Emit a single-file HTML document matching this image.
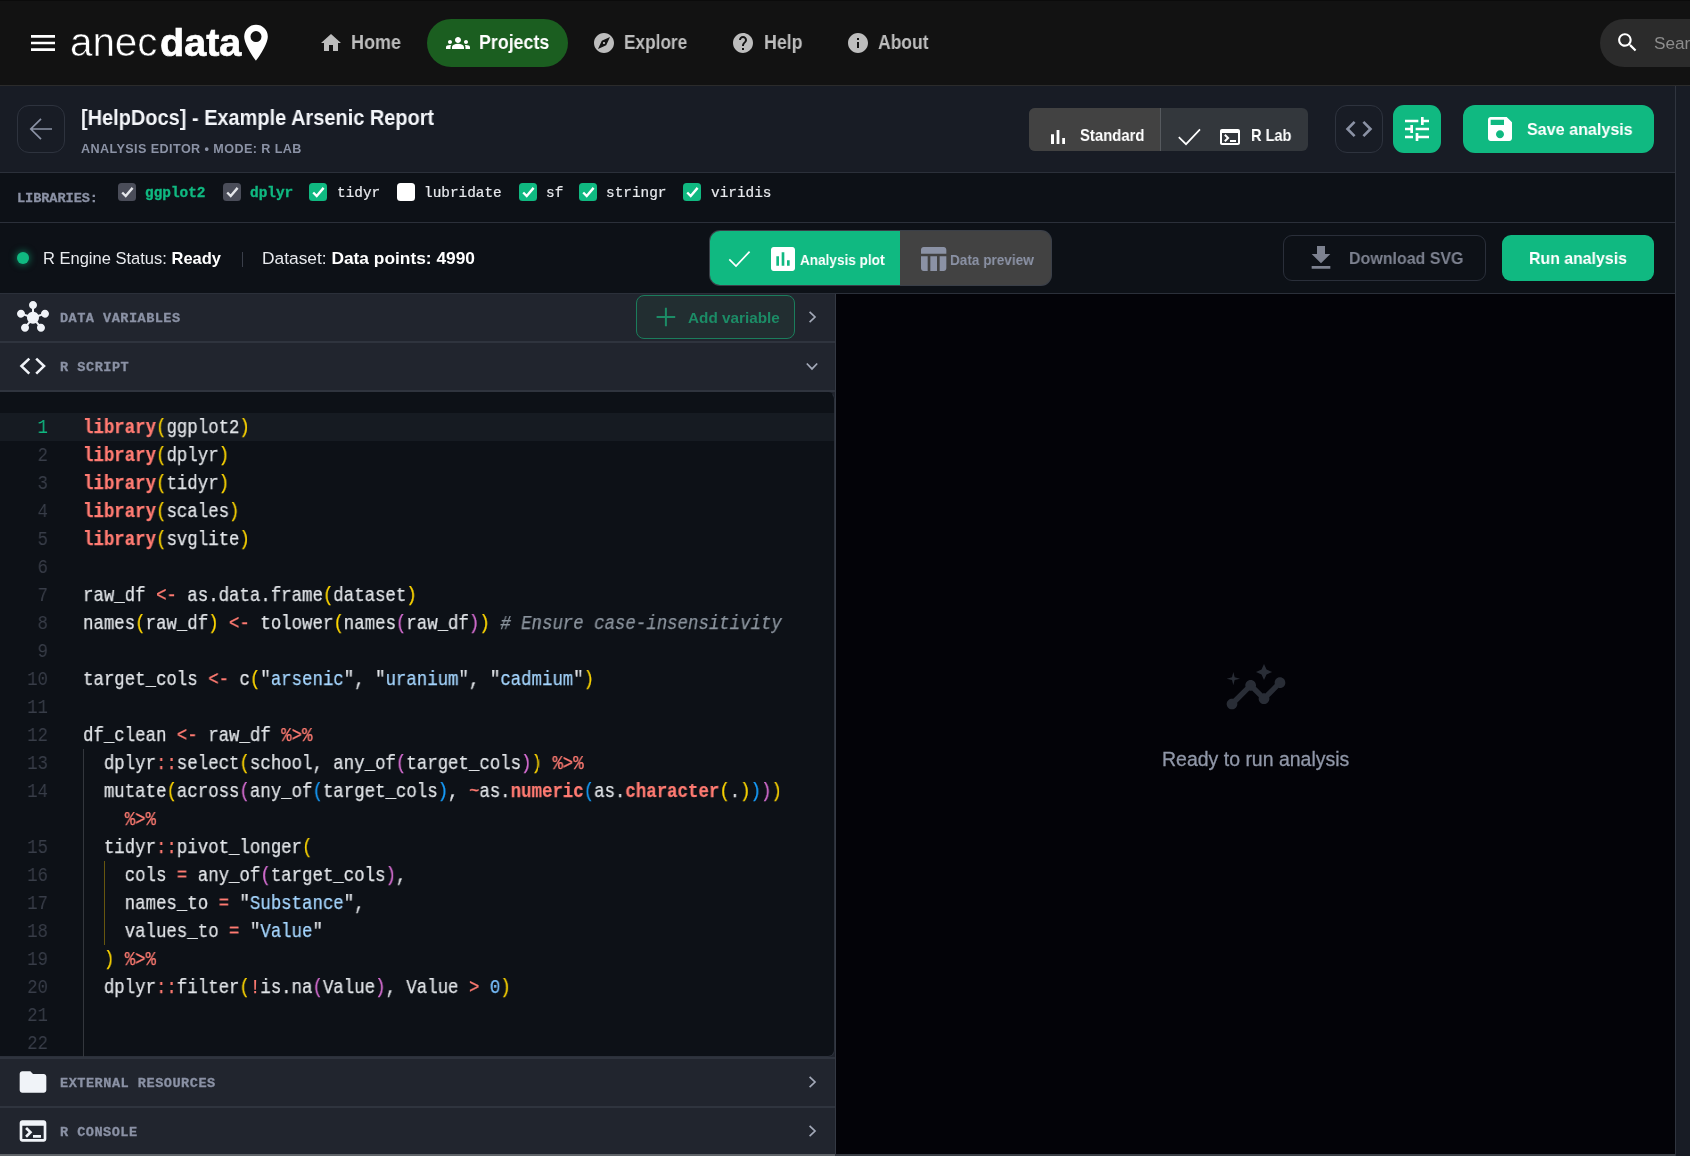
<!DOCTYPE html>
<html lang="en"><head><meta charset="utf-8"><title>Anecdata - Analysis Editor</title>
<style>
html,body{margin:0;padding:0;background:#0d1117;}
body{width:1690px;height:1156px;position:relative;overflow:hidden;font-family:"Liberation Sans",sans-serif;}
.t{position:absolute;white-space:pre;margin:0;will-change:transform;}
.i,.b,.a{position:absolute;display:block;}
.b{box-sizing:border-box;}

.ln{position:absolute;left:0;width:47.9px;text-align:right;color:#383d48;font:400 20px/28px "Liberation Mono",monospace;height:28px;transform:scaleX(.869);transform-origin:100% 0;will-change:transform;}
.cl{position:absolute;left:82.5px;white-space:pre;color:#e1e4e8;font:400 19.5px/28px "Liberation Mono",monospace;height:28px;transform:scaleX(.8913);transform-origin:0 0;-webkit-text-stroke:.25px currentColor;will-change:transform;}
.k{color:#ff7b72;font-weight:700}.o{color:#ff7b72}.p1{color:#ffd700}.p2{color:#da70d6}.p3{color:#179fff}
.s{color:#a5d6ff}.n{color:#79c0ff}.c{color:#8b949e;font-style:italic}

</style></head><body>
<div class="b" style="left:0px;top:0px;width:1690px;height:85px;background:#121212;"></div>
<div class="b" style="left:0px;top:0px;width:1690px;height:1px;background:#0b0b0b;"></div>
<div class="b" style="left:0px;top:85px;width:1690px;height:1px;background:#2b2b2b;"></div>
<svg class="i" style="left:27.00px;top:27.00px" width="32.00" height="32.00" viewBox="0 0 24 24" fill="#ffffff" ><path d="M3 18h18v-2H3v2zm0-5h18v-2H3v2zm0-7v2h18V6H3z"/></svg>
<div class="t" style="left:70.20px;top:16.00px;font:400 40.00px/52px 'Liberation Sans',sans-serif;color:#fff;transform:scaleX(1.0078);transform-origin:0 0;-webkit-text-stroke:0.55px #121212;">anec</div>
<div class="t" style="left:159.60px;top:17.00px;font:700 39.20px/51px 'Liberation Sans',sans-serif;color:#fff;transform:scaleX(1.0090);transform-origin:0 0;-webkit-text-stroke:0.7px #fff;">data</div>
<svg class="i" style="left:240px;top:20px" width="32" height="44" viewBox="240 20 32 44"><path fill="#fff" fill-rule="evenodd" d="M256 60.8C256 60.8 244.2 45.5 244.2 36.6A11.8 11.8 0 1 1 267.8 36.6C267.8 45.5 256 60.8 256 60.8ZM256 31.1a5.5 5.5 0 1 0 0 11a5.5 5.5 0 1 0 0-11Z"/></svg>
<svg class="i" style="left:318.50px;top:31.00px" width="24.00" height="24.00" viewBox="0 0 24 24" fill="#bdbdbd" ><path d="M10 20v-6h4v6h5v-8h3L12 3 2 12h3v8z"/></svg>
<div class="t" style="left:351.40px;top:29.90px;font:700 19.60px/25px 'Liberation Sans',sans-serif;color:#bdbdbd;transform:scaleX(0.9183);transform-origin:0 0;">Home</div>
<div class="b" style="left:427px;top:19px;width:141px;height:48px;background:#1b5e20;border-radius:24px"></div>
<svg class="i" style="left:445.80px;top:31.00px" width="24.00" height="24.00" viewBox="0 0 24 24" fill="#fff" ><path d="M12 12.75c1.63 0 3.07.39 4.24.9 1.08.48 1.76 1.56 1.76 2.73V18H6v-1.61c0-1.18.68-2.26 1.76-2.73 1.17-.52 2.61-.91 4.24-.91zM4 13c1.1 0 2-.9 2-2s-.9-2-2-2-2 .9-2 2 .9 2 2 2zm1.13 1.1c-.37-.06-.74-.1-1.13-.1-.99 0-1.93.21-2.78.58C.48 14.9 0 15.62 0 16.43V18h4.5v-1.61c0-.83.23-1.61.63-2.29zM20 13c1.1 0 2-.9 2-2s-.9-2-2-2-2 .9-2 2 .9 2 2 2zm4 3.43c0-.81-.48-1.53-1.22-1.85-.85-.37-1.79-.58-2.78-.58-.39 0-.76.04-1.13.1.4.68.63 1.46.63 2.29V18H24v-1.57zM12 6c1.66 0 3 1.34 3 3s-1.34 3-3 3-3-1.34-3-3 1.34-3 3-3z"/></svg>
<div class="t" style="left:478.60px;top:29.90px;font:700 19.60px/25px 'Liberation Sans',sans-serif;color:#fff;transform:scaleX(0.9077);transform-origin:0 0;">Projects</div>
<svg class="i" style="left:592.00px;top:31.00px" width="24.00" height="24.00" viewBox="0 0 24 24" fill="#bdbdbd" ><path d="M12 10.9c-.61 0-1.1.49-1.1 1.1s.49 1.1 1.1 1.1c.61 0 1.1-.49 1.1-1.1s-.49-1.1-1.1-1.1zM12 2C6.48 2 2 6.48 2 12s4.48 10 10 10 10-4.48 10-10S17.52 2 12 2zm2.19 12.19L6 18l3.81-8.19L18 6l-3.81 8.19z"/></svg>
<div class="t" style="left:624.30px;top:29.90px;font:700 19.60px/25px 'Liberation Sans',sans-serif;color:#bdbdbd;transform:scaleX(0.8791);transform-origin:0 0;">Explore</div>
<svg class="i" style="left:731.00px;top:31.00px" width="24.00" height="24.00" viewBox="0 0 24 24" fill="#bdbdbd" ><path d="M12 2C6.48 2 2 6.48 2 12s4.48 10 10 10 10-4.48 10-10S17.52 2 12 2zm1 17h-2v-2h2v2zm2.07-7.75l-.9.92C13.45 12.9 13 13.5 13 15h-2v-.5c0-1.1.45-2.1 1.17-2.83l1.24-1.26c.37-.36.59-.86.59-1.41 0-1.1-.9-2-2-2s-2 .9-2 2H8c0-2.21 1.79-4 4-4s4 1.79 4 4c0 .88-.36 1.68-.93 2.25z"/></svg>
<div class="t" style="left:763.70px;top:29.90px;font:700 19.60px/25px 'Liberation Sans',sans-serif;color:#bdbdbd;transform:scaleX(0.9065);transform-origin:0 0;">Help</div>
<svg class="i" style="left:845.50px;top:31.00px" width="24.00" height="24.00" viewBox="0 0 24 24" fill="#bdbdbd" ><path d="M12 2C6.48 2 2 6.48 2 12s4.48 10 10 10 10-4.48 10-10S17.52 2 12 2zm1 15h-2v-6h2v6zm0-8h-2V7h2v2z"/></svg>
<div class="t" style="left:878.40px;top:29.90px;font:700 19.60px/25px 'Liberation Sans',sans-serif;color:#bdbdbd;transform:scaleX(0.8939);transform-origin:0 0;">About</div>
<div class="b" style="left:1600px;top:19px;width:140px;height:48px;background:#2b2b2b;border-radius:24px"></div>
<svg class="i" style="left:1614.50px;top:30.00px" width="25.00" height="25.00" viewBox="0 0 24 24" fill="#fff" ><path d="M15.5 14h-.79l-.28-.27C15.41 12.59 16 11.11 16 9.5 16 5.91 13.09 3 9.5 3S3 5.91 3 9.5 5.91 16 9.5 16c1.61 0 3.09-.59 4.23-1.57l.27.28v.79l5 4.99L20.49 19l-4.99-5zm-6 0C7.01 14 5 11.99 5 9.5S7.01 5 9.5 5 14 7.01 14 9.5 11.99 14 9.5 14z"/></svg>
<div class="t" style="left:1653.60px;top:32.00px;font:400 17.20px/22px 'Liberation Sans',sans-serif;color:#8c8c8c;">Search</div>
<div class="b" style="left:0px;top:86px;width:1690px;height:86px;background:#181c25;"></div>
<div class="b" style="left:0px;top:172px;width:1690px;height:1px;background:#2b303a;"></div>
<div class="b" style="left:17px;top:105px;width:48px;height:48px;background:transparent;border:1px solid #2e333e;border-radius:12px"></div>
<svg class="i" style="left:17px;top:105px" width="48" height="48" viewBox="17 105 48 48" fill="none" stroke="#8b92a5" stroke-width="1.7"><path d="M52 129H31.2M41 118.8L30.8 129L41 139.2"/></svg>
<div class="t" style="left:80.60px;top:104.20px;font:700 21.60px/28px 'Liberation Sans',sans-serif;color:#f3f5f9;transform:scaleX(0.9244);transform-origin:0 0;">[HelpDocs] - Example Arsenic Report</div>
<div class="t" style="left:81.30px;top:140.70px;font:700 12.60px/16px 'Liberation Sans',sans-serif;color:#8b92a5;letter-spacing:0.417px;">ANALYSIS EDITOR • MODE: R LAB</div>
<div class="b" style="left:1029px;top:108px;width:279px;height:43px;background:#33373c;border-radius:6px"></div>
<div class="b" style="left:1029px;top:108px;width:132px;height:43px;background:#424242;border-radius:6px 0 0 6px"></div>
<div class="b" style="left:1160px;top:108px;width:1px;height:43px;background:#565a5f;"></div>
<svg class="i" style="left:1046.00px;top:124.60px" width="24.00" height="24.00" viewBox="0 0 24 24" fill="#fff" ><path d="M5 9.2h3V19H5zM10.6 5h2.8v14h-2.8zm5.6 8H19v6h-2.8z"/></svg>
<div class="t" style="left:1079.80px;top:125.20px;font:700 16.20px/21px 'Liberation Sans',sans-serif;color:#fff;transform:scaleX(0.9187);transform-origin:0 0;">Standard</div>
<svg class="i" style="left:1174px;top:124px" width="32" height="26" viewBox="1174 124 32 26" fill="none" stroke="#fff" stroke-width="1.7"><path d="M1178.8 137.2L1186 144.2L1200 129.4"/></svg>
<svg class="i" style="left:1217.50px;top:124.80px" width="24.00" height="24.00" viewBox="0 0 24 24" fill="#fff" ><path d="M20 4H4c-1.11 0-2 .9-2 2v12c0 1.1.89 2 2 2h16c1.1 0 2-.9 2-2V6c0-1.1-.9-2-2-2zm0 14H4V8h16v10zm-2-1h-6v-2h6v2zM7.5 17l-1.41-1.41L8.67 13l-2.59-2.59L7.5 9l4 4-4 4z"/></svg>
<div class="t" style="left:1250.80px;top:125.20px;font:700 16.20px/21px 'Liberation Sans',sans-serif;color:#fff;transform:scaleX(0.8999);transform-origin:0 0;">R Lab</div>
<div class="b" style="left:1335px;top:105px;width:48px;height:48px;background:transparent;border:1px solid #2e333e;border-radius:12px"></div>
<svg class="i" style="left:1342.50px;top:113.00px" width="32.00" height="32.00" viewBox="0 0 24 24" fill="#8b92a5" ><path d="M9.4 16.6L4.8 12l4.6-4.6L8 6l-6 6 6 6 1.4-1.4zm5.2 0l4.6-4.6-4.6-4.6L16 6l6 6-6 6-1.4-1.4z"/></svg>
<div class="b" style="left:1393px;top:105px;width:48px;height:48px;background:#10b981;border-radius:11px"></div>
<svg class="i" style="left:1401.00px;top:113.00px" width="32.00" height="32.00" viewBox="0 0 24 24" fill="#fff" ><path d="M3 17v2h6v-2H3zM3 5v2h10V5H3zm10 16v-2h8v-2h-8v-2h-2v6h2zM7 9v2H3v2h4v2h2V9H7zm14 4v-2H11v2h10zm-6-4h2V7h4V5h-4V3h-2v6z"/></svg>
<div class="b" style="left:1463px;top:105px;width:191px;height:48px;background:#10b981;border-radius:12px"></div>
<svg class="i" style="left:1484.00px;top:113.00px" width="32.00" height="32.00" viewBox="0 0 24 24" fill="#fff" ><path d="M17 3H5c-1.11 0-2 .9-2 2v14c0 1.1.89 2 2 2h14c1.1 0 2-.9 2-2V7l-4-4zm-5 16c-1.66 0-3-1.34-3-3s1.34-3 3-3 3 1.34 3 3-1.34 3-3 3zm3-10H5V5h10v4z"/></svg>
<div class="t" style="left:1526.60px;top:118.80px;font:700 17.00px/22px 'Liberation Sans',sans-serif;color:#fff;transform:scaleX(0.9477);transform-origin:0 0;">Save analysis</div>
<div class="b" style="left:0px;top:173px;width:1690px;height:49px;background:#0d1117;"></div>
<div class="b" style="left:0px;top:222px;width:1690px;height:1px;background:#2b303a;"></div>
<div class="t" style="left:16.80px;top:189.80px;font:700 13.60px/18px 'Liberation Mono',monospace;color:#8b92a5;letter-spacing:-0.068px;-webkit-text-stroke:.3px #8b92a5;">LIBRARIES:</div>
<div class="b" style="left:118.4px;top:183px;width:18px;height:18px;background:#4a4d59;border-radius:3.5px"></div>
<svg class="i" style="left:118.4px;top:183px" width="18" height="18" viewBox="0 0 18 18" fill="none" stroke="#e4e6ea" stroke-width="2.4"><path d="M4.2 9.5L7.7 13L14.6 4.9"/></svg>
<div class="t" style="left:145.40px;top:184.00px;font:700 14.40px/19px 'Liberation Mono',monospace;color:#10b981;-webkit-text-stroke:.35px #10b981;">ggplot2</div>
<div class="b" style="left:222.9px;top:183px;width:18px;height:18px;background:#4a4d59;border-radius:3.5px"></div>
<svg class="i" style="left:222.9px;top:183px" width="18" height="18" viewBox="0 0 18 18" fill="none" stroke="#e4e6ea" stroke-width="2.4"><path d="M4.2 9.5L7.7 13L14.6 4.9"/></svg>
<div class="t" style="left:249.90px;top:184.00px;font:700 14.40px/19px 'Liberation Mono',monospace;color:#10b981;-webkit-text-stroke:.35px #10b981;">dplyr</div>
<div class="b" style="left:309.3px;top:183px;width:18px;height:18px;background:#10b981;border-radius:3.5px"></div>
<svg class="i" style="left:309.3px;top:183px" width="18" height="18" viewBox="0 0 18 18" fill="none" stroke="#fff" stroke-width="2.4"><path d="M4.2 9.5L7.7 13L14.6 4.9"/></svg>
<div class="t" style="left:336.90px;top:184.00px;font:400 14.40px/19px 'Liberation Mono',monospace;color:#e8eaee;-webkit-text-stroke:.2px #e8eaee;">tidyr</div>
<div class="b" style="left:396.7px;top:183px;width:18px;height:18px;background:#ffffff;border-radius:3.5px"></div>
<div class="t" style="left:424.30px;top:184.00px;font:400 14.40px/19px 'Liberation Mono',monospace;color:#e8eaee;-webkit-text-stroke:.2px #e8eaee;">lubridate</div>
<div class="b" style="left:518.5px;top:183px;width:18px;height:18px;background:#10b981;border-radius:3.5px"></div>
<svg class="i" style="left:518.5px;top:183px" width="18" height="18" viewBox="0 0 18 18" fill="none" stroke="#fff" stroke-width="2.4"><path d="M4.2 9.5L7.7 13L14.6 4.9"/></svg>
<div class="t" style="left:546.10px;top:184.00px;font:400 14.40px/19px 'Liberation Mono',monospace;color:#e8eaee;-webkit-text-stroke:.2px #e8eaee;">sf</div>
<div class="b" style="left:578.8px;top:183px;width:18px;height:18px;background:#10b981;border-radius:3.5px"></div>
<svg class="i" style="left:578.8px;top:183px" width="18" height="18" viewBox="0 0 18 18" fill="none" stroke="#fff" stroke-width="2.4"><path d="M4.2 9.5L7.7 13L14.6 4.9"/></svg>
<div class="t" style="left:606.40px;top:184.00px;font:400 14.40px/19px 'Liberation Mono',monospace;color:#e8eaee;-webkit-text-stroke:.2px #e8eaee;">stringr</div>
<div class="b" style="left:683.4px;top:183px;width:18px;height:18px;background:#10b981;border-radius:3.5px"></div>
<svg class="i" style="left:683.4px;top:183px" width="18" height="18" viewBox="0 0 18 18" fill="none" stroke="#fff" stroke-width="2.4"><path d="M4.2 9.5L7.7 13L14.6 4.9"/></svg>
<div class="t" style="left:711.00px;top:184.00px;font:400 14.40px/19px 'Liberation Mono',monospace;color:#e8eaee;-webkit-text-stroke:.2px #e8eaee;">viridis</div>
<div class="b" style="left:0px;top:223px;width:1690px;height:70px;background:#0d1117;"></div>
<div class="b" style="left:0px;top:293px;width:1690px;height:1px;background:#2b303a;"></div>
<div class="b" style="left:17.3px;top:252px;width:12px;height:12px;background:#10b981;border-radius:50%;box-shadow:0 0 7px 1px rgba(16,185,129,.55)"></div>
<div class="t" style="left:42.90px;top:248.30px;font:400 16.30px/21px 'Liberation Sans',sans-serif;color:#e8eaee;transform:scaleX(1.0138);transform-origin:0 0;"><span style="font-weight:400;color:#e8eaee">R Engine Status: </span><span style="font-weight:700;color:#fff">Ready</span></div>
<div class="b" style="left:242px;top:252px;width:1px;height:15px;background:#3a3f4a;"></div>
<div class="t" style="left:262.40px;top:248.30px;font:400 16.30px/21px 'Liberation Sans',sans-serif;color:#e8eaee;transform:scaleX(1.0650);transform-origin:0 0;"><span style="font-weight:400;color:#e8eaee">Dataset: </span><span style="font-weight:700;color:#fff">Data points: 4990</span></div>
<div class="b" style="left:709px;top:230px;width:343px;height:56px;background:#3a3f48;border-radius:11px"></div>
<div class="b" style="left:710px;top:231px;width:341px;height:54px;background:#424242;border-radius:10px"></div>
<div class="b" style="left:710px;top:231px;width:190.3px;height:54px;background:#10b981;border-radius:10px 0 0 10px"></div>
<svg class="i" style="left:724px;top:245px" width="32" height="28" viewBox="724 245 32 28" fill="none" stroke="#fff" stroke-width="1.7"><path d="M729.3 259.3L736 266L749.6 251.6"/></svg>
<svg class="i" style="left:767.00px;top:243.00px" width="32.00" height="32.00" viewBox="0 0 24 24" fill="#fff" ><path d="M19 3H5c-1.1 0-2 .9-2 2v14c0 1.1.9 2 2 2h14c1.1 0 2-.9 2-2V5c0-1.1-.9-2-2-2zM9 17H7v-7h2v7zm4 0h-2V7h2v10zm4 0h-2v-4h2v4z"/></svg>
<div class="t" style="left:799.80px;top:249.60px;font:700 15.40px/20px 'Liberation Sans',sans-serif;color:#fff;transform:scaleX(0.8816);transform-origin:0 0;">Analysis plot</div>
<svg class="i" style="left:917.00px;top:243.00px" width="32.00" height="32.00" viewBox="0 0 24 24" fill="#8b92a5" ><path d="M10 10.02h5V21h-5zM17 21h3c1.1 0 2-.9 2-2v-9h-5v11zm3-18H5c-1.1 0-2 .9-2 2v3h19V5c0-1.1-.9-2-2-2zM3 19c0 1.1.9 2 2 2h3V10H3v9z"/></svg>
<div class="t" style="left:950.00px;top:249.60px;font:700 15.40px/20px 'Liberation Sans',sans-serif;color:#8b92a5;transform:scaleX(0.8817);transform-origin:0 0;">Data preview</div>
<div class="b" style="left:1283px;top:235px;width:203px;height:46px;background:transparent;border:1px solid #2a2f3a;border-radius:9px"></div>
<svg class="i" style="left:1305.20px;top:242.00px" width="32.00" height="32.00" viewBox="0 0 24 24" fill="#7d8290" ><path d="M5 20h14v-2H5v2zM19 9h-4V3H9v6H5l7 7 7-7z"/></svg>
<div class="t" style="left:1348.80px;top:248.20px;font:700 17.00px/22px 'Liberation Sans',sans-serif;color:#7d8290;transform:scaleX(0.9398);transform-origin:0 0;">Download SVG</div>
<div class="b" style="left:1502px;top:235px;width:152px;height:46px;background:#10b981;border-radius:9px"></div>
<div class="t" style="left:1529.20px;top:248.20px;font:700 17.00px/22px 'Liberation Sans',sans-serif;color:#fff;transform:scaleX(0.9335);transform-origin:0 0;">Run analysis</div>
<div class="b" style="left:0px;top:294px;width:835px;height:862px;background:#21252e;"></div>
<div class="b" style="left:0px;top:341px;width:835px;height:2px;background:#2f343e;"></div>
<div class="t" style="left:59.80px;top:310.00px;font:700 13.60px/18px 'Liberation Mono',monospace;color:#8b92a5;letter-spacing:0.457px;-webkit-text-stroke:.3px #8b92a5;">DATA VARIABLES</div>
<svg class="i" style="left:16.60px;top:300.50px" width="32.00" height="32.00" viewBox="0 0 24 24" fill="#f0f3f8" ><path d="M8.4 18.2c.38.5.6 1.12.6 1.8 0 1.66-1.34 3-3 3s-3-1.34-3-3 1.34-3 3-3c.44 0 .85.09 1.23.26l1.41-1.77c-.92-1.03-1.29-2.39-1.09-3.69l-2.03-.68c-.54.83-1.46 1.38-2.52 1.38-1.66 0-3-1.34-3-3s1.34-3 3-3 3 1.34 3 3c0 .07 0 .14-.01.21l2.03.68c.64-1.21 1.82-2.09 3.22-2.32V5.91C9.96 5.57 9 4.4 9 3c0-1.66 1.34-3 3-3s3 1.34 3 3c0 1.4-.96 2.57-2.25 2.91v2.16c1.4.23 2.58 1.11 3.22 2.32l2.03-.68c-.01-.07-.01-.14-.01-.21 0-1.66 1.34-3 3-3s3 1.34 3 3-1.34 3-3 3c-1.06 0-1.98-.55-2.52-1.38l-2.03.68c.2 1.29-.16 2.65-1.09 3.69l1.41 1.77c.38-.17.79-.26 1.23-.26 1.66 0 3 1.34 3 3s-1.34 3-3 3-3-1.34-3-3c0-.68.22-1.3.6-1.8l-1.41-1.77c-1.35.75-3.01.76-4.37 0L8.4 18.2z"/></svg>
<div class="b" style="left:0px;top:390px;width:835px;height:2px;background:#2f343e;"></div>
<div class="t" style="left:59.80px;top:359.00px;font:700 13.60px/18px 'Liberation Mono',monospace;color:#8b92a5;letter-spacing:0.501px;-webkit-text-stroke:.3px #8b92a5;">R SCRIPT</div>
<svg class="i" style="left:16px;top:350px" width="34" height="32" viewBox="16 350 34 32" fill="none" stroke="#f0f3f8" stroke-width="2.6"><path d="M29.3 358.6L21.5 366.1L29.3 373.6M36.2 358.6L44 366.1L36.2 373.6"/></svg>
<div class="b" style="left:636px;top:295px;width:159px;height:44px;background:#222e31;border:1px solid #1b7d5c;border-radius:8px"></div>
<svg class="i" style="left:652px;top:303px" width="28" height="28" viewBox="652 303 28 28" fill="none" stroke="#1c8c66" stroke-width="2"><path d="M656.6 317H675.2M665.9 307.8V326.2"/></svg>
<div class="t" style="left:688.20px;top:307.80px;font:700 15.00px/20px 'Liberation Sans',sans-serif;color:#1c8c66;transform:scaleX(1.0197);transform-origin:0 0;">Add variable</div>
<svg class="i" style="left:800px;top:305px" width="24" height="24" viewBox="800 305 24 24" fill="none" stroke="#a3a9b8" stroke-width="1.7"><path d="M809.6 311.8L815 317L809.6 322.2"/></svg>
<svg class="i" style="left:800px;top:354px" width="24" height="24" viewBox="800 354 24 24" fill="none" stroke="#a3a9b8" stroke-width="1.7"><path d="M806.8 363.5L812 368.9L817.2 363.5"/></svg>
<div class="b" style="left:-1px;top:392px;width:836px;height:665px;background:#0d1117;border:1px solid #2b303a;border-radius:0 7px 7px 0;border-top-color:#0d1117;border-left:0"></div>
<div class="b" style="left:0px;top:413px;width:834px;height:28px;background:#161b22;"></div>
<div class="b" style="left:83px;top:749px;width:1px;height:308px;background:#33373d;"></div>
<div class="b" style="left:104px;top:861px;width:1px;height:84px;background:#66560f;"></div>
<div class="b" style="left:0px;top:1057px;width:835px;height:2px;background:#2f343e;"></div>
<div class="b" style="left:0px;top:1106px;width:835px;height:2px;background:#2f343e;"></div>
<div class="t" style="left:59.80px;top:1075.00px;font:700 13.60px/18px 'Liberation Mono',monospace;color:#8b92a5;letter-spacing:0.494px;-webkit-text-stroke:.3px #8b92a5;">EXTERNAL RESOURCES</div>
<svg class="i" style="left:16.80px;top:1065.80px" width="32.00" height="32.00" viewBox="0 0 24 24" fill="#f0f3f8" ><path d="M10 4H4c-1.1 0-1.99.9-1.99 2L2 18c0 1.1.9 2 2 2h16c1.1 0 2-.9 2-2V8c0-1.1-.9-2-2-2h-8l-2-2z"/></svg>
<div class="b" style="left:0px;top:1155px;width:835px;height:2px;background:#2f343e;"></div>
<div class="t" style="left:59.80px;top:1124.00px;font:700 13.60px/18px 'Liberation Mono',monospace;color:#8b92a5;letter-spacing:0.456px;-webkit-text-stroke:.3px #8b92a5;">R CONSOLE</div>
<svg class="i" style="left:16.80px;top:1114.80px" width="32.00" height="32.00" viewBox="0 0 24 24" fill="#f0f3f8" ><path d="M20 4H4c-1.11 0-2 .9-2 2v12c0 1.1.89 2 2 2h16c1.1 0 2-.9 2-2V6c0-1.1-.9-2-2-2zm0 14H4V8h16v10zm-2-1h-6v-2h6v2zM7.5 17l-1.41-1.41L8.67 13l-2.59-2.59L7.5 9l4 4-4 4z"/></svg>
<div class="b" style="left:0px;top:1154px;width:835px;height:2px;background:#5f6368;"></div>
<svg class="i" style="left:800px;top:1070px" width="24" height="24" viewBox="800 1070 24 24" fill="none" stroke="#a3a9b8" stroke-width="1.7"><path d="M809.6 1076.8L815 1082L809.6 1087.2"/></svg>
<svg class="i" style="left:800px;top:1119px" width="24" height="24" viewBox="800 1119 24 24" fill="none" stroke="#a3a9b8" stroke-width="1.7"><path d="M809.6 1125.8L815 1131L809.6 1136.2"/></svg>
<div class="ln" style="top:413.5px;color:#10b981;">1</div>
<div class="cl" style="top:413.5px"><span class="k">library</span><span class="p1">(</span>ggplot2<span class="p1">)</span></div>
<div class="ln" style="top:441.5px;">2</div>
<div class="cl" style="top:441.5px"><span class="k">library</span><span class="p1">(</span>dplyr<span class="p1">)</span></div>
<div class="ln" style="top:469.5px;">3</div>
<div class="cl" style="top:469.5px"><span class="k">library</span><span class="p1">(</span>tidyr<span class="p1">)</span></div>
<div class="ln" style="top:497.5px;">4</div>
<div class="cl" style="top:497.5px"><span class="k">library</span><span class="p1">(</span>scales<span class="p1">)</span></div>
<div class="ln" style="top:525.5px;">5</div>
<div class="cl" style="top:525.5px"><span class="k">library</span><span class="p1">(</span>svglite<span class="p1">)</span></div>
<div class="ln" style="top:553.5px;">6</div>
<div class="ln" style="top:581.5px;">7</div>
<div class="cl" style="top:581.5px">raw_df <span class="o">&lt;-</span> as.data.frame<span class="p1">(</span>dataset<span class="p1">)</span></div>
<div class="ln" style="top:609.5px;">8</div>
<div class="cl" style="top:609.5px">names<span class="p1">(</span>raw_df<span class="p1">)</span> <span class="o">&lt;-</span> tolower<span class="p1">(</span>names<span class="p2">(</span>raw_df<span class="p2">)</span><span class="p1">)</span> <span class="c"># Ensure case-insensitivity</span></div>
<div class="ln" style="top:637.5px;">9</div>
<div class="ln" style="top:665.5px;">10</div>
<div class="cl" style="top:665.5px">target_cols <span class="o">&lt;-</span> c<span class="p1">(</span>"<span class="s">arsenic</span>", "<span class="s">uranium</span>", "<span class="s">cadmium</span>"<span class="p1">)</span></div>
<div class="ln" style="top:693.5px;">11</div>
<div class="ln" style="top:721.5px;">12</div>
<div class="cl" style="top:721.5px">df_clean <span class="o">&lt;-</span> raw_df <span class="o">%&gt;%</span></div>
<div class="ln" style="top:749.5px;">13</div>
<div class="cl" style="top:749.5px">  dplyr<span class="o">::</span>select<span class="p1">(</span>school, any_of<span class="p2">(</span>target_cols<span class="p2">)</span><span class="p1">)</span> <span class="o">%&gt;%</span></div>
<div class="ln" style="top:777.5px;">14</div>
<div class="cl" style="top:777.5px">  mutate<span class="p1">(</span>across<span class="p2">(</span>any_of<span class="p3">(</span>target_cols<span class="p3">)</span>, <span class="o">~</span>as.<span class="k">numeric</span><span class="p3">(</span>as.<span class="k">character</span><span class="p1">(</span>.<span class="p1">)</span><span class="p3">)</span><span class="p2">)</span><span class="p1">)</span></div>
<div class="cl" style="top:805.5px">    <span class="o">%&gt;%</span></div>
<div class="ln" style="top:833.5px;">15</div>
<div class="cl" style="top:833.5px">  tidyr<span class="o">::</span>pivot_longer<span class="p1">(</span></div>
<div class="ln" style="top:861.5px;">16</div>
<div class="cl" style="top:861.5px">    cols <span class="o">=</span> any_of<span class="p2">(</span>target_cols<span class="p2">)</span>,</div>
<div class="ln" style="top:889.5px;">17</div>
<div class="cl" style="top:889.5px">    names_to <span class="o">=</span> "<span class="s">Substance</span>",</div>
<div class="ln" style="top:917.5px;">18</div>
<div class="cl" style="top:917.5px">    values_to <span class="o">=</span> "<span class="s">Value</span>"</div>
<div class="ln" style="top:945.5px;">19</div>
<div class="cl" style="top:945.5px">  <span class="p1">)</span> <span class="o">%&gt;%</span></div>
<div class="ln" style="top:973.5px;">20</div>
<div class="cl" style="top:973.5px">  dplyr<span class="o">::</span>filter<span class="p1">(</span><span class="o">!</span>is.na<span class="p2">(</span>Value<span class="p2">)</span>, Value <span class="o">&gt;</span> <span class="n">0</span><span class="p1">)</span></div>
<div class="ln" style="top:1001.5px;">21</div>
<div class="ln" style="top:1029.5px;">22</div>
<div class="b" style="left:835px;top:294px;width:1px;height:862px;background:#343943;"></div>
<div class="b" style="left:836px;top:294px;width:839px;height:862px;background:#030308;"></div>
<div class="b" style="left:836px;top:1154px;width:839px;height:2px;background:#3a3e45;"></div>
<svg class="i" style="left:1223.50px;top:656.00px" width="64.00" height="64.00" viewBox="0 0 24 24" fill="#292d36" ><path d="M21 8c-1.45 0-2.26 1.44-1.93 2.51l-3.55 3.56c-.3-.09-.74-.09-1.04 0l-2.55-2.55C12.27 10.45 11.46 9 10 9c-1.45 0-2.27 1.44-1.93 2.52l-4.56 4.55C2.44 15.74 1 16.55 1 18c0 1.1.9 2 2 2 1.45 0 2.26-1.44 1.93-2.51l4.55-4.56c.3.09.74.09 1.04 0l2.55 2.55C12.73 16.55 13.54 18 15 18c1.45 0 2.27-1.44 1.93-2.52l3.56-3.55c1.07.33 2.51-.48 2.51-1.93 0-1.1-.9-2-2-2zM15 9l.94-2.07L18 6l-2.06-.93L15 3l-.92 2.07L12 6l2.08.93zM3.5 11L4 9l2-.5L4 8l-.5-2L3 8l-2 .5L3 9z"/></svg>
<div class="t" style="left:1161.60px;top:747.00px;font:400 19.40px/25px 'Liberation Sans',sans-serif;color:#9097a8;transform:scaleX(1.0046);transform-origin:0 0;-webkit-text-stroke:.3px #9097a8;">Ready to run analysis</div>
<div class="b" style="left:1675px;top:86px;width:15px;height:1070px;background:#181c25;border-left:1px solid #30353f"></div>
</body></html>
